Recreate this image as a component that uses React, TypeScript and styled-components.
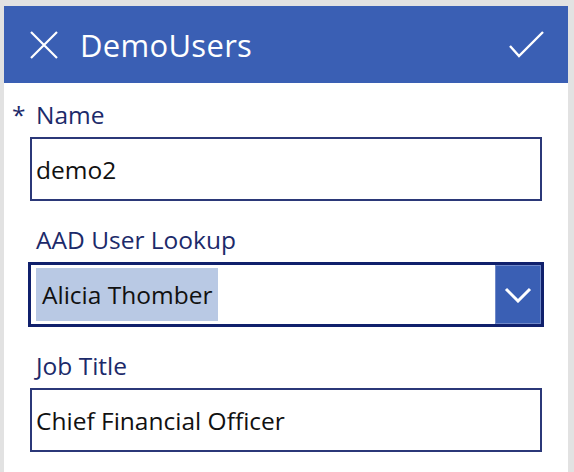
import { createGlobalStyle, styled } from "styled-components";

const GlobalStyle = createGlobalStyle`
  html, body {
    margin: 0;
    padding: 0;
    background: #e2e2e2;
    font-family: "Open Sans", "Noto Sans", sans-serif;
  }
`;

const App = () => {
  return (
    <Page>
      <GlobalStyle />
      <Card>
        <Header>
          <IconButton aria-label="Close">
            <svg width="30" height="30" viewBox="0 0 30 30">
              <path d="M2 2 L28 28 M28 2 L2 28" stroke="#fff" strokeWidth="2.2" fill="none" />
            </svg>
          </IconButton>
          <Title>DemoUsers</Title>
          <IconButton aria-label="Save">
            <svg width="38" height="28" viewBox="0 0 38 28">
              <path d="M2 15 L11 25 L35 1" stroke="#fff" strokeWidth="2.4" fill="none" />
            </svg>
          </IconButton>
        </Header>
        <Form>
          <Field>
            <Label>
              <Required>*</Required>
              Name
            </Label>
            <TextBox>demo2</TextBox>
          </Field>
          <Field>
            <Label>AAD User Lookup</Label>
            <Combo>
              <Selected>Alicia Thomber</Selected>
              <ChevronButton>
                <svg width="28" height="16" viewBox="0 0 28 16">
                  <path d="M2 2 L14 14 L26 2" stroke="#fff" strokeWidth="3" fill="none" />
                </svg>
              </ChevronButton>
            </Combo>
          </Field>
          <Field>
            <Label>Job Title</Label>
            <TextBox>Chief Financial Officer</TextBox>
          </Field>
        </Form>
      </Card>
    </Page>
  );
};

export default App;

const Page = styled.div`
  width: 574px;
  height: 472px;
  padding: 6px 6px 0 4px;
  box-sizing: border-box;
  overflow: hidden;
`;

const Card = styled.div`
  background: #ffffff;
  height: 100%;
  display: flex;
  flex-direction: column;
`;

const Header = styled.div`
  height: 77px;
  background: #3a5fb4;
  display: flex;
  align-items: center;
  padding: 0 22px 0 25px;
  flex-shrink: 0;
`;

const IconButton = styled.div`
  display: flex;
  align-items: center;
  justify-content: center;

  svg {
    display: block;
  }
`;

const Title = styled.div`
  flex: 1;
  color: #ffffff;
  font-size: 31px;
  line-height: 40px;
  margin-left: 21px;
  letter-spacing: 0.3px;
`;

const Form = styled.div`
  display: flex;
  flex-direction: column;
  gap: 23px;
  padding: 16px 26px 0 24px;
`;

const Field = styled.div`
  display: flex;
  flex-direction: column;
  gap: 6px;
`;

const Label = styled.div`
  position: relative;
  padding-left: 8px;
  font-size: 24.5px;
  line-height: 32px;
  color: #1c2a6a;
`;

const Required = styled.span`
  position: absolute;
  left: -16px;
  top: 0;
  color: #1c2a6a;
`;

const TextBox = styled.div`
  height: 64px;
  box-sizing: border-box;
  border: 2px solid #2b3878;
  margin-left: 2px;
  padding: 0 4px;
  display: flex;
  align-items: center;
  font-size: 24.5px;
  color: #111111;
`;

const Combo = styled.div`
  height: 65px;
  box-sizing: border-box;
  border: 3px solid #10206c;
  margin-right: -2px;
  display: flex;
  align-items: stretch;
  padding: 0 0 0 5px;
`;

const Selected = styled.div`
  align-self: center;
  height: 53px;
  background: #b9c9e4;
  display: flex;
  align-items: center;
  padding: 0 6px;
  font-size: 24.5px;
  color: #111111;
`;

const ChevronButton = styled.div`
  margin-left: auto;
  width: 44px;
  background: #3a5fb4;
  border: 1px solid #6f88c8;
  display: flex;
  align-items: center;
  justify-content: center;
`;
